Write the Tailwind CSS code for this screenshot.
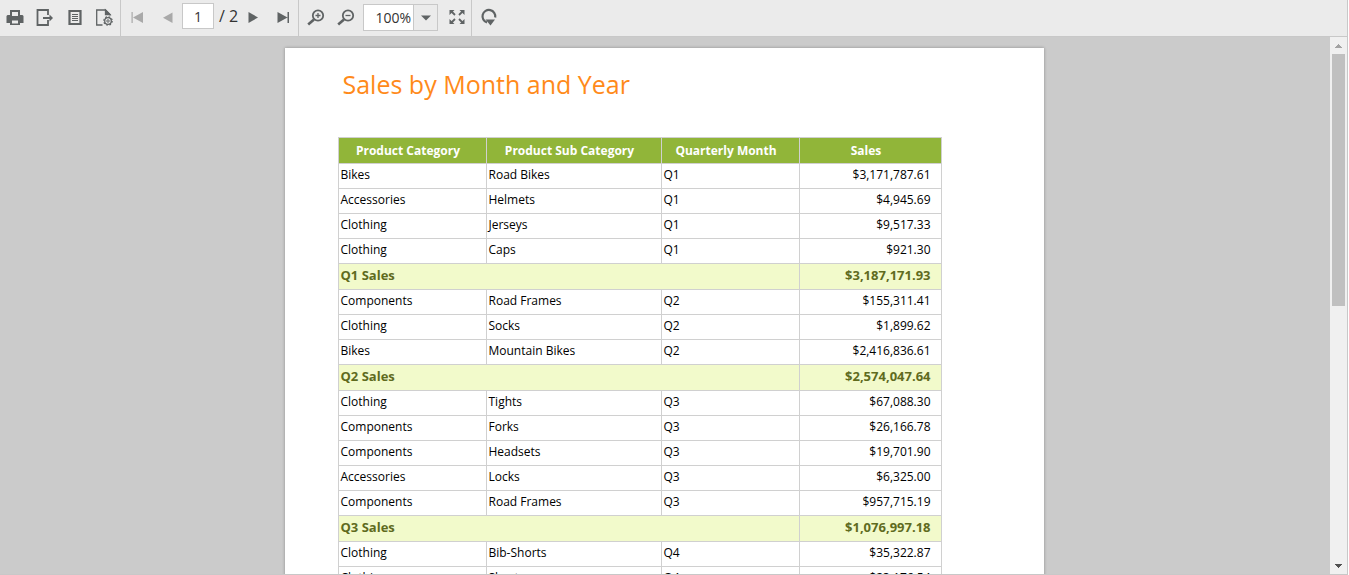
<!DOCTYPE html>
<html lang="en">
<head>
<meta charset="utf-8">
<meta name="viewport" content="width=device-width, initial-scale=1">
<title>Sales by Month and Year</title>
<script src="https://cdn.jsdelivr.net/npm/@tailwindcss/browser@4"></script>
</head>
<body class="h-screen overflow-hidden bg-white pr-px font-['Open_Sans','Noto_Sans',sans-serif] text-black">
<div class="flex h-full flex-col border-r border-b border-[#c8c8c8] bg-[#cbcbcb]">
  <header class="flex h-[37px] shrink-0 border-b border-[#c8c8c8] bg-[#ebebeb] text-[#5f6364]" role="toolbar" aria-label="Report viewer">
    <div class="flex w-[121px] items-start border-r border-[#c8c8c8] pt-2">
      <button class="flex w-[30px] justify-center" aria-label="Print"><svg width="20" height="20" viewBox="0 0 20 20" fill="currentColor"><path d="M5 2h10v6h-2V4H7v4H5z"/><path d="M2.500 7H5v1h10V7h2.500l1 1v7H15v-3H5v3H1.500V8z"/><path d="M5 11h10v6H5zm2 1.500v3h6v-3z" fill-rule="evenodd"/></svg></button>
      <button class="flex w-[30px] justify-center" aria-label="Export"><svg width="20" height="20" viewBox="0 0 20 20" fill="none" stroke="currentColor" stroke-width="1.800"><path d="M13 7V2H2.500v15H13v-5M8 10h9"/><path d="M14.500 6.500v7l3.500-3.500z" fill="currentColor" stroke="none"/></svg></button>
      <button class="flex w-[30px] justify-center" aria-label="Print layout"><svg width="20" height="20" viewBox="0 0 20 20" fill="none" stroke="currentColor"><path d="M4.500 3h11v13h-11z" stroke-width="2.200"/><path d="M7 6.500h6M7 8.500h6M7 10.500h6M7 12.500h6"/></svg></button>
      <button class="flex w-[30px] justify-center" aria-label="Page setup"><svg width="20" height="20" viewBox="0 0 20 20" fill="none" stroke="currentColor" stroke-width="1.300"><path d="M7.500 17H1.700V2H10.500l4.500 4.500V7.500"/><path d="M10.500 2v4.500H15z" fill="currentColor"/><circle cx="13" cy="13" r="3.300"/><circle cx="13" cy="13" r="4.200" stroke-width="1.200" stroke-dasharray="1.700 1.600"/><circle cx="13" cy="13" r="1.200" stroke-width="1"/></svg></button>
    </div>
    <div class="flex w-[178px] items-start border-r border-[#c8c8c8] pt-[3px]">
      <button class="mt-[5px] ml-[6px] flex w-5 justify-center text-[#a9a9a9]" aria-label="First page" disabled><svg width="20" height="20" viewBox="0 0 20 20" fill="currentColor"><path d="M4.500 4h1.200v11H4.500zM16 4v11L6 9.500z"/></svg></button>
      <button class="mt-[5px] ml-[10px] flex w-5 justify-center text-[#a9a9a9]" aria-label="Previous page" disabled><svg width="20" height="20" viewBox="0 0 20 20" fill="currentColor"><path d="M15.500 4.500v10.500L6 9.700z"/></svg></button>
      <input class="ml-[5px] h-[26px] w-8 border border-[#c8c8c8] bg-white text-center text-sm text-[#333]" aria-label="Current page" value="1">
      <span class="ml-[5px] w-5 text-base leading-[26px] whitespace-nowrap text-[#333]">/ 2</span>
      <button class="mt-[5px] ml-[4px] flex w-5 justify-center" aria-label="Next page"><svg width="20" height="20" viewBox="0 0 20 20" fill="currentColor"><path d="M5.500 4v11l9.500-5.500z"/></svg></button>
      <button class="mt-[5px] ml-[10px] flex w-5 justify-center" aria-label="Last page"><svg width="20" height="20" viewBox="0 0 20 20" fill="currentColor"><path d="M4.500 4v11l10-5.500zM14.500 4h1.500v11h-1.500z"/></svg></button>
    </div>
    <div class="flex w-[173px] items-start border-r border-[#c8c8c8] pt-1">
      <button class="mt-[3px] ml-[7px] flex w-5 justify-center" aria-label="Zoom in"><svg width="20" height="20" viewBox="0 0 20 20" fill="none" stroke="currentColor"><circle cx="12" cy="8.500" r="5.200" stroke-width="1.800"/><path d="M8 12.500L2.200 17.500" stroke-width="2.600"/><path d="M9.500 8.500h5M12 6v5" stroke-width="1.300"/></svg></button>
      <button class="mt-[3px] ml-[10px] flex w-5 justify-center" aria-label="Zoom out"><svg width="20" height="20" viewBox="0 0 20 20" fill="none" stroke="currentColor"><circle cx="12" cy="8.500" r="5.200" stroke-width="1.800"/><path d="M8 12.500L2.200 17.500" stroke-width="2.600"/><path d="M9.500 8.500h5" stroke-width="1.300"/></svg></button>
      <div class="ml-[7px] flex h-[27px] w-[75px] border border-[#c8c8c8] bg-white">
        <input class="w-[49px] pr-[2px] text-right text-sm text-[#333]" aria-label="Zoom level" value="100%">
        <button class="flex flex-1 items-center justify-center border-l border-[#c8c8c8] bg-[#ebebeb]" aria-label="Choose zoom level"><svg width="10" height="6" viewBox="0 0 10 6" fill="currentColor"><path d="M0 .5h10L5 5.500z"/></svg></button>
      </div>
      <button class="mt-[3px] ml-[9px] flex w-5 justify-center" aria-label="Fit to page"><svg width="20" height="20" viewBox="0 0 20 20" fill="currentColor" stroke="currentColor" stroke-width="1.800"><path d="M4 4l4 4M16 4l-4 4M4 16l4-4M16 16l-4-4"/><path stroke="none" d="M2.500 3h5l-5 5zM17.500 3h-5l5 5zM2.500 17h5l-5-5zM17.500 17h-5l5-5z"/></svg></button>
    </div>
    <button class="mt-[7px] ml-[7px] flex size-5 justify-center" aria-label="Refresh"><svg width="20" height="20" viewBox="0 0 20 20" fill="none" stroke="currentColor" stroke-width="2.200"><path d="M8 15.500A6.400 6.400 0 1 1 16.200 10.500"/><path d="M6.500 12.500h9.500L11.500 18.500z" fill="currentColor" stroke="none"/></svg></button>
  </header>

  <div class="flex min-h-0 flex-1">
    <main class="min-w-0 flex-1 overflow-hidden pt-[11px] pr-[2px]">
      <article class="mx-auto min-h-full max-w-[759px] bg-white pr-[102px] pl-[53px] pt-4 shadow-[0_0_3px_#00000050]">
        <h1 class="pl-[5px] text-[25px] leading-10 font-normal text-[#ff8a1a]">Sales by Month and Year</h1>
        <table class="mt-[33px] w-full table-fixed border-collapse text-xs [&_td]:border [&_td]:border-[#d0d0d0] [&_td]:px-[2px] [&_td]:pb-[2px] [&_th]:border [&_th]:border-[#d0d0d0] [&_td:last-child]:pr-[10px] [&_td:last-child]:text-right">
          <colgroup><col class="w-[148px]"><col class="w-[175px]"><col class="w-[138px]"><col class="w-[142px]"></colgroup>
          <thead class="bg-[#91b539] text-white">
            <tr class="h-[26px]"><th class="pr-2 leading-5" scope="col">Product Category</th><th class="pr-2 leading-5" scope="col">Product Sub Category</th><th class="pr-2 leading-5" scope="col">Quarterly Month</th><th class="pr-2 leading-5" scope="col">Sales</th></tr>
          </thead>
          <tbody>
            <tr class="h-[25px]"><td>Bikes</td><td>Road Bikes</td><td>Q1</td><td>$3,171,787.61</td></tr>
            <tr class="h-[25px]"><td>Accessories</td><td>Helmets</td><td>Q1</td><td>$4,945.69</td></tr>
            <tr class="h-[25px]"><td>Clothing</td><td>Jerseys</td><td>Q1</td><td>$9,517.33</td></tr>
            <tr class="h-[25px]"><td>Clothing</td><td>Caps</td><td>Q1</td><td>$921.30</td></tr>
            <tr class="h-[26px] bg-[#f2facb] text-[13px] font-bold text-[#5f6b1e]"><td colspan="3">Q1 Sales</td><td>$3,187,171.93</td></tr>
            <tr class="h-[25px]"><td>Components</td><td>Road Frames</td><td>Q2</td><td>$155,311.41</td></tr>
            <tr class="h-[25px]"><td>Clothing</td><td>Socks</td><td>Q2</td><td>$1,899.62</td></tr>
            <tr class="h-[25px]"><td>Bikes</td><td>Mountain Bikes</td><td>Q2</td><td>$2,416,836.61</td></tr>
            <tr class="h-[26px] bg-[#f2facb] text-[13px] font-bold text-[#5f6b1e]"><td colspan="3">Q2 Sales</td><td>$2,574,047.64</td></tr>
            <tr class="h-[25px]"><td>Clothing</td><td>Tights</td><td>Q3</td><td>$67,088.30</td></tr>
            <tr class="h-[25px]"><td>Components</td><td>Forks</td><td>Q3</td><td>$26,166.78</td></tr>
            <tr class="h-[25px]"><td>Components</td><td>Headsets</td><td>Q3</td><td>$19,701.90</td></tr>
            <tr class="h-[25px]"><td>Accessories</td><td>Locks</td><td>Q3</td><td>$6,325.00</td></tr>
            <tr class="h-[25px]"><td>Components</td><td>Road Frames</td><td>Q3</td><td>$957,715.19</td></tr>
            <tr class="h-[26px] bg-[#f2facb] text-[13px] font-bold text-[#5f6b1e]"><td colspan="3">Q3 Sales</td><td>$1,076,997.18</td></tr>
            <tr class="h-[25px]"><td>Clothing</td><td>Bib-Shorts</td><td>Q4</td><td>$35,322.87</td></tr>
            <tr class="h-[25px]"><td>Clothing</td><td>Shorts</td><td>Q4</td><td>$23,176.54</td></tr>
          </tbody>
        </table>
      </article>
    </main>
    <div class="flex w-[17px] flex-col items-center bg-[#f0f0f0]" aria-hidden="true">
      <div class="flex h-[17px] w-full shrink-0 items-center justify-center"><svg width="7" height="4" viewBox="0 0 7 4" fill="#a3a3a3"><path d="M3 0h1v1h1v1h1v1h1v1H0V3h1V2h1V1h1z"/></svg></div>
      <div class="w-full flex-1 px-[2px]"><div class="h-full max-h-[252px] bg-[#c0c0c0]"></div></div>
      <div class="flex h-[17px] w-full shrink-0 items-center justify-center"><svg width="7" height="4" viewBox="0 0 7 4" fill="#505050"><path d="M0 0h7v1H6v1H5v1H4v1H3V3H2V2H1V1H0z"/></svg></div>
    </div>
  </div>
</div>
</body>
</html>
